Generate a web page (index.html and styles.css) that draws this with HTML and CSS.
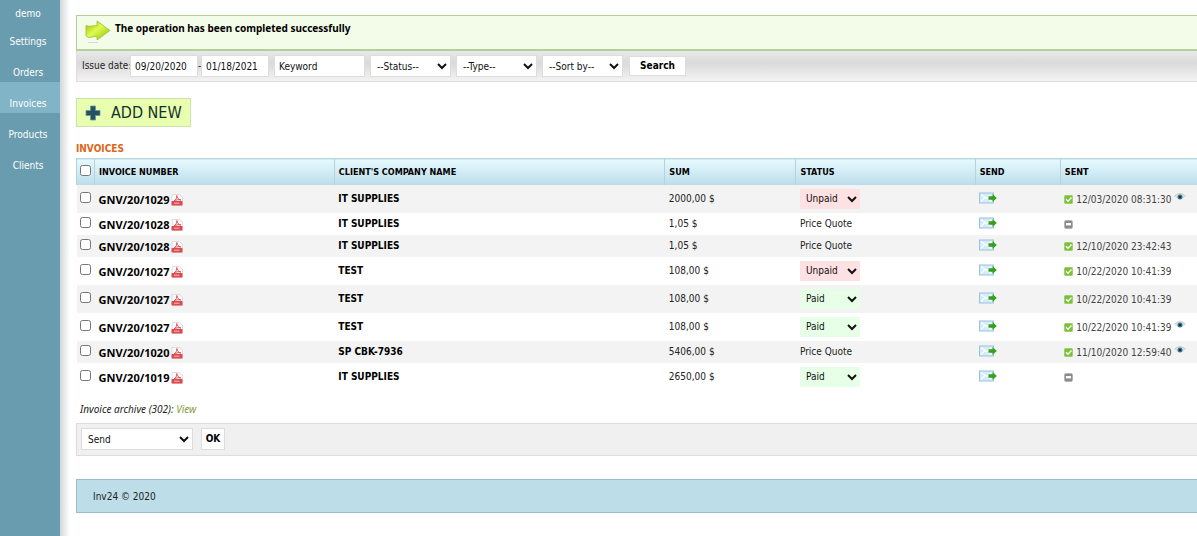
FILE: index.html
```
<!DOCTYPE html>
<html lang="en">
<head>
    <meta charset="UTF-8">
    <meta name="viewport" content="width=device-width, initial-scale=1.0">
    <title>Inv24 - Invoices</title>
    <link rel="stylesheet" href="styles.css">
</head>
<body>
    <!-- shared icons -->
    <svg class="sprite" aria-hidden="true">
        <symbol id="pdf" viewBox="0 0 12 12">
            <path d="M1 .5h7.500l3 2.500v8.500H1z" fill="#fafafa" stroke="#ccc" stroke-width=".6"/>
            <path d="M3 7c2-1 3-3.500 2.800-5.500C6.500 4.500 8 6 10 6 7.500 5.200 5 6 3 7z" fill="none" stroke="#d9363b" stroke-width=".8"/>
            <rect x=".5" y="7" width="11" height="4.500" rx=".8" fill="#dc4a50"/>
            <path d="M3 9.200h5.500" stroke="#f7b9bb" stroke-width="1"/>
        </symbol>
        <symbol id="mail" viewBox="0 0 18 12">
            <rect x=".5" y="1" width="14" height="10" fill="#d3ebfa" stroke="#9ac3da"/>
            <path d="M2 2.500l5.500 4 5-4M2 9.500l3.500-3.500M12.500 9.500L9.500 7" fill="none" stroke="#fff" stroke-width="1.200"/>
            <path d="M9.500 4.300h4V2L17.800 6l-4.300 4V7.700h-4z" fill="#36a01c"/>
        </symbol>
        <symbol id="ok" viewBox="0 0 9 9">
            <rect x=".5" y=".5" width="8" height="8" rx="1" fill="#79c236" stroke="#9bcf69"/>
            <path d="M2 4.200l2 2 3.500-3.700" fill="none" stroke="#fff" stroke-width="1.400"/>
        </symbol>
        <symbol id="none" viewBox="0 0 9 9">
            <rect x=".5" y=".5" width="8" height="8" rx="1.500" fill="#8b8b8b" stroke="#b0b0b0" stroke-width=".8"/>
            <rect x="2" y="3" width="5" height="2.400" fill="#fff"/>
        </symbol>
        <symbol id="eye" viewBox="0 0 12 8">
            <path d="M.5 3.500Q6-1.500 11.500 3.500 6 8.500.5 3.500z" fill="#d5e3e6"/>
            <path d="M.5 3Q6-1.500 11.500 3" fill="none" stroke="#b4b9ba" stroke-width=".8"/>
            <circle cx="6" cy="4" r="2.500" fill="#3e7c92"/>
            <circle cx="6" cy="4" r="1.300" fill="#132e3b"/>
        </symbol>
    </svg>

    <div class="page">
        <nav class="sidebar">
            <a href="#" class="user">demo</a>
            <a href="#">Settings</a>
            <a href="#">Orders</a>
            <a href="#" class="active">Invoices</a>
            <a href="#">Products</a>
            <a href="#">Clients</a>
        </nav>

        <main class="content">
            <div class="message">
                <svg class="arrow" viewBox="0 0 26 24" aria-hidden="true">
                    <defs>
                        <linearGradient id="lime" x1="0" y1="0" x2="1" y2="1">
                            <stop offset="0" stop-color="#8dc400"/>
                            <stop offset=".45" stop-color="#e2f950"/>
                            <stop offset="1" stop-color="#80c000"/>
                        </linearGradient>
                    </defs>
                    <path d="M1 5.500l3 .8 8-.8V1l13 9.500L12 20v-4l-8 1.500-3-1.500z" fill="url(#lime)" stroke="#9fc03a" stroke-width=".8"/>
                    <path d="M3 22.500h10" stroke="#d5dccb"/>
                </svg>
                <strong>The operation has been completed successfully</strong>
            </div>

            <form class="filter">
                <label for="from">Issue date:</label>
                <input type="text" id="from" class="date" value="09/20/2020">
                <span class="dash">-</span>
                <input type="text" class="date" value="01/18/2021" aria-label="Issue date to">
                <input type="text" class="keyword" value="Keyword" aria-label="Keyword">
                <select aria-label="Status"><option>--Status--</option></select>
                <select aria-label="Type"><option>--Type--</option></select>
                <select aria-label="Sort by"><option>--Sort by--</option></select>
                <button type="button" class="search">Search</button>
            </form>

            <a href="#" class="add-new">
                <svg viewBox="0 0 16 16" aria-hidden="true"><path d="M5.500 1h5v4.500H15v5h-4.500V15h-5v-4.500H1v-5h4.500z" fill="#245260" stroke="#6f9794" stroke-width=".8"/></svg>
                ADD NEW
            </a>

            <h1>INVOICES</h1>
            <table>
                <colgroup>
                    <col class="c-check"><col class="c-number"><col class="c-client"><col class="c-sum"><col class="c-status"><col class="c-send"><col>
                </colgroup>
                <thead>
                    <tr>
                        <th><input type="checkbox" aria-label="Select all"></th>
                        <th>INVOICE NUMBER</th>
                        <th>CLIENT'S COMPANY NAME</th>
                        <th>SUM</th>
                        <th>STATUS</th>
                        <th>SEND</th>
                        <th>SENT</th>
                    </tr>
                </thead>
                <tbody id="invoices"></tbody>
            </table>

            <p class="archive">Invoice archive (302): <a href="#">View</a></p>

            <form class="actions">
                <select aria-label="Action"><option>Send</option></select>
                <button type="button">OK</button>
            </form>

            <footer>Inv24 © 2020</footer>
        </main>
    </div>

    <script>
        const invoices = [
            { number: 'GNV/20/1029', client: 'IT SUPPLIES', sum: '2000,00 $', status: 'Unpaid', sent: '12/03/2020 08:31:30', seen: true },
            { number: 'GNV/20/1028', client: 'IT SUPPLIES', sum: '1,05 $', status: 'Price Quote', sent: '' },
            { number: 'GNV/20/1028', client: 'IT SUPPLIES', sum: '1,05 $', status: 'Price Quote', sent: '12/10/2020 23:42:43' },
            { number: 'GNV/20/1027', client: 'TEST', sum: '108,00 $', status: 'Unpaid', sent: '10/22/2020 10:41:39' },
            { number: 'GNV/20/1027', client: 'TEST', sum: '108,00 $', status: 'Paid', sent: '10/22/2020 10:41:39' },
            { number: 'GNV/20/1027', client: 'TEST', sum: '108,00 $', status: 'Paid', sent: '10/22/2020 10:41:39', seen: true },
            { number: 'GNV/20/1020', client: 'SP CBK-7936', sum: '5406,00 $', status: 'Price Quote', sent: '11/10/2020 12:59:40', seen: true },
            { number: 'GNV/20/1019', client: 'IT SUPPLIES', sum: '2650,00 $', status: 'Paid', sent: '' }
        ];

        function icon(name) {
            return `<svg class="i-${name}" aria-hidden="true"><use href="#${name}"/></svg>`;
        }

        function statusCell(status) {
            if (status === 'Price Quote') return status;
            let other = status === 'Paid' ? 'Unpaid' : 'Paid';
            return `<select class="${status.toLowerCase()}" aria-label="Status"><option>${status}</option><option>${other}</option></select>`;
        }

        document.getElementById('invoices').innerHTML = invoices.map(inv => `
            <tr class="${inv.status === 'Price Quote' ? 'quote' : ''}">
                <td><input type="checkbox" aria-label="Select ${inv.number}"></td>
                <td><div class="number">${inv.number} <a href="#" aria-label="PDF">${icon('pdf')}</a></div></td>
                <td class="client">${inv.client}</td>
                <td>${inv.sum}</td>
                <td>${statusCell(inv.status)}</td>
                <td><a href="#" aria-label="Send">${icon('mail')}</a></td>
                <td><div class="sent">${icon(inv.sent ? 'ok' : 'none')}<span>${inv.sent}</span>${inv.seen ? icon('eye') : ''}</div></td>
            </tr>`).join('');
    </script>
</body>
</html>
```
FILE: styles.css
```
* {
    box-sizing: border-box;
}
body {
    margin: 0;
    background: #fff;
    color: #222;
    font: 10px/14px Tahoma, "DejaVu Sans Condensed", "DejaVu Sans", sans-serif;
}
.sprite {
    display: none;
}
svg {
    display: block;
}
.page {
    display: flex;
    min-height: 100vh;
}
.sidebar {
    width: 60px;
    flex-shrink: 0;
    background: #699cae;
}
.sidebar a {
    display: block;
    height: 31px;
    padding: 15px 4px 0 0;
    color: #fff;
    text-align: center;
    text-decoration: none;
}
.sidebar .user {
    height: 20px;
    padding-top: 7px;
}
.sidebar .active {
    background: #82b4c8;
}
.content {
    flex: 1;
    min-width: 0;
    padding: 15px 0 0 16px;
    background: linear-gradient(90deg, #d4d8da, #fff 10px);
}
.message {
    display: flex;
    height: 36px;
    padding: 4px 8px;
    border: 1px solid #b5cf98;
    border-width: 1px 0 2px 1px;
    background: #f3fbe9;
    color: #000;
    font-family: Tahoma, "Noto Sans", sans-serif;
}
.arrow {
    width: 26px;
    height: 24px;
    margin-right: 4px;
}
.message strong {
    padding-top: 1px;
}
.filter {
    display: flex;
    align-items: center;
    height: 31px;
    padding-left: 5px;
    border: 1px solid #ddd;
    border-width: 0 0 1px 1px;
    background: linear-gradient(#e9e9e9, #dadada 40%, #f3f3f3);
}
input[type=text], select, button {
    height: 22px;
    margin: 0;
    border: 1px solid #ddd;
    border-radius: 0;
    background-color: #fff;
    color: #111;
    font: inherit;
}
input[type=text] {
    padding: 0 4px;
}
.filter label {
    width: 48px;
    white-space: nowrap;
}
.date {
    width: 68px;
}
.dash {
    width: 3px;
}
.filter .keyword {
    width: 91px;
    margin-left: 5px;
}
select {
    padding: 0 0 0 2px;
}
.filter select {
    width: 81px;
    margin-left: 5px;
}
button {
    padding: 0;
    color: #000;
    font-weight: bold;
    cursor: pointer;
}
.search {
    width: 57px;
    height: 20px;
    margin-left: 6px;
}
.add-new {
    display: flex;
    align-items: center;
    gap: 10px;
    width: 115px;
    height: 29px;
    margin-top: 16px;
    padding-left: 8px;
    border: 1px solid #cfdfb0;
    background: #e8ffb0;
    color: #15302e;
    font-size: 16px;
    white-space: nowrap;
    text-decoration: none;
}
.add-new svg {
    width: 16px;
    height: 16px;
    flex-shrink: 0;
}
h1 {
    margin: 15px 0 2px;
    color: #dd6618;
    font-size: 10px;
    line-height: 14px;
}
table {
    width: 100%;
    table-layout: fixed;
    border-collapse: collapse;
}
.c-check { width: 18px; }
.c-number { width: 21.4%; }
.c-client { width: 29.5%; }
.c-sum { width: 11.7%; }
.c-status { width: 16%; }
.c-send { width: 7.6%; }
th {
    height: 26px;
    padding: 0 0 0 4px;
    border-top: 1px solid #b7d5df;
    border-left: 1px solid #b3d3df;
    background: linear-gradient(#e6fafe, #bcdceb);
    color: #000;
    font-size: 9px;
    text-align: left;
}
td {
    height: 28px;
    padding: 0 0 0 4px;
}
.quote td {
    height: 22px;
}
tbody tr:nth-child(odd) {
    background: #f3f3f3;
}
input[type=checkbox] {
    display: block;
    width: 11px;
    height: 11px;
    margin: 0;
}
th input[type=checkbox], td input[type=checkbox] {
    margin-bottom: 2px;
}
th:first-child, td:first-child {
    padding-left: 3px;
}
.number, .sent {
    display: flex;
    align-items: center;
    padding-top: 2px;
}
.number {
    gap: 2px;
    color: #000;
    font: bold 11px/14px Tahoma, "Noto Sans", sans-serif;
}
.client {
    color: #000;
    font-weight: bold;
}
.i-pdf {
    width: 12px;
    height: 12px;
}
.i-mail {
    width: 18px;
    height: 12px;
    margin-bottom: 2px;
}
.sent {
    gap: 3px;
    color: #444;
}
.i-ok, .i-none {
    width: 9px;
    height: 9px;
}
.i-eye {
    width: 12px;
    height: 8px;
    margin-bottom: 6px;
}
td select {
    display: block;
    width: 60px;
    height: 20px;
    border: 0;
}
.unpaid {
    background-color: #fde1e3;
}
.paid {
    background-color: #e6ffe6;
}
.archive {
    margin: 11px 0 7px 4px;
    font-family: Tahoma, "Noto Sans", sans-serif;
    font-style: italic;
}
.archive a {
    color: #7f9c3c;
    text-decoration: none;
}
.actions {
    display: flex;
    align-items: center;
    gap: 8px;
    height: 33px;
    padding-left: 4px;
    border: 1px solid #ddd;
    border-right: 0;
    background: #f0f0f0;
}
.actions select {
    width: 112px;
}
.actions button {
    width: 24px;
}
footer {
    height: 34px;
    margin-top: 23px;
    padding: 10px 16px;
    border: 1px solid #9bbcc8;
    border-right: 0;
    background: #bddde8;
}
```
